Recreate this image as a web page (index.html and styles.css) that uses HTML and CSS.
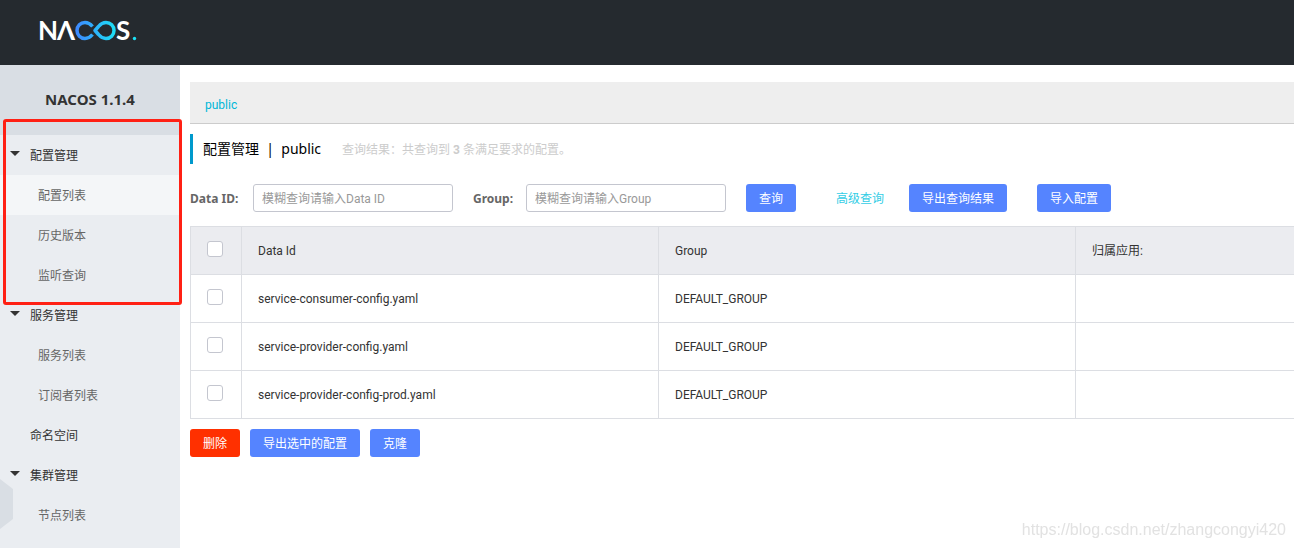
FILE: index.html
```html
<!DOCTYPE html>
<html lang="zh-CN">
<head>
<meta charset="utf-8">
<title>NACOS</title>
<link rel="stylesheet" href="styles.css">
</head>
<body>
<header class="topbar">
  <a class="logo" href="#" aria-label="NACOS">
    <svg width="110" height="41" viewBox="-4 -8 110 41">
      <defs>
        <linearGradient id="loop" gradientUnits="userSpaceOnUse" x1="36" y1="0" x2="77" y2="0">
          <stop offset="0" stop-color="#3f86ff"/>
          <stop offset="1" stop-color="#1be1f6"/>
        </linearGradient>
      </defs>
      <text class="logo-letter" x="-1" y="22">N</text>
      <text class="logo-letter" x="18" y="22">Λ</text>
      <path d="M53.500 8.500C51 5.500 49 4.500 46 4.500C41.500 4.500 38 8 38 12.500S41.500 20.500 46 20.500C49 20.500 51 19.500 53.500 16.500M56 12.500L59.500 8.500C62 5.500 64 4.500 67 4.500C71.500 4.500 75 8 75 12.500S71.500 20.500 67 20.500C64 20.500 62 19.500 59.500 16.500Z" fill="none" stroke="url(#loop)" stroke-width="3.500" stroke-linejoin="round"/>
      <text class="logo-letter" x="77" y="22">S</text>
      <circle cx="95.500" cy="20.500" r="1.700" fill="#1be1f6"/>
    </svg>
  </a>
</header>
<div class="layout">
  <aside class="sidebar">
    <h1 class="version">NACOS 1.1.4</h1>
    <nav class="menu">
      <a class="item group open" href="#">配置管理</a>
      <a class="item sub active" href="#">配置列表</a>
      <a class="item sub" href="#">历史版本</a>
      <a class="item sub" href="#">监听查询</a>
      <a class="item group open" href="#">服务管理</a>
      <a class="item sub" href="#">服务列表</a>
      <a class="item sub" href="#">订阅者列表</a>
      <a class="item group" href="#">命名空间</a>
      <a class="item group open" href="#">集群管理</a>
      <a class="item sub" href="#">节点列表</a>
    </nav>
    <button class="collapse" type="button" aria-label="收起"></button>
    <div class="highlight"></div>
  </aside>
  <main class="main">
    <div class="namespaces"><a class="namespace" href="#">public</a></div>
    <div class="heading">
      <h2 class="title">配置管理&nbsp; |&nbsp; public</h2>
      <span class="result">查询结果：共查询到 <strong>3</strong> 条满足要求的配置。</span>
    </div>
    <form class="search">
      <label class="label" for="data-id">Data ID:</label>
      <input class="field" id="data-id" type="text" placeholder="模糊查询请输入Data ID">
      <label class="label label-next" for="group">Group:</label>
      <input class="field" id="group" type="text" placeholder="模糊查询请输入Group">
      <button class="btn btn-query" type="button">查询</button>
      <a class="advanced" href="#">高级查询</a>
      <button class="btn btn-export" type="button">导出查询结果</button>
      <button class="btn" type="button">导入配置</button>
    </form>
    <table class="table">
      <thead>
        <tr><th class="check"><input class="box" type="checkbox" aria-label="全选"></th><th class="col">Data Id</th><th class="col">Group</th><th>归属应用:</th></tr>
      </thead>
      <tbody>
        <tr><td class="check"><input class="box" type="checkbox" aria-label="service-consumer-config.yaml"></td><td>service-consumer-config.yaml</td><td>DEFAULT_GROUP</td><td></td></tr>
        <tr><td class="check"><input class="box" type="checkbox" aria-label="service-provider-config.yaml"></td><td>service-provider-config.yaml</td><td>DEFAULT_GROUP</td><td></td></tr>
        <tr><td class="check"><input class="box" type="checkbox" aria-label="service-provider-config-prod.yaml"></td><td>service-provider-config-prod.yaml</td><td>DEFAULT_GROUP</td><td></td></tr>
      </tbody>
    </table>
    <div class="actions">
      <button class="btn btn-danger" type="button">删除</button>
      <button class="btn" type="button">导出选中的配置</button>
      <button class="btn" type="button">克隆</button>
    </div>
  </main>
</div>
<div class="watermark">https://blog.csdn.net/zhangcongyi420</div>
</body>
</html>
```
FILE: styles.css
```css
* {
  box-sizing: border-box;
}

body {
  margin: 0;
  height: 100vh;
  display: flex;
  flex-direction: column;
  overflow: hidden;
  background: #fff;
  color: #333;
  font: 12px/20px Roboto, "Noto Sans CJK SC", sans-serif;
}

a {
  text-decoration: none;
}

.topbar {
  flex: none;
  height: 65px;
  padding: 10px 35px;
  background: #252a2f;
}

.logo {
  display: inline-block;
}

.logo svg {
  display: block;
}

.logo-letter {
  fill: #fff;
  font: 700 26px Lato, sans-serif;
}

.layout {
  flex: 1;
  display: flex;
  min-height: 0;
}

.sidebar {
  position: relative;
  flex: none;
  width: 180px;
  background: #eaedf1;
}

.version {
  margin: 0;
  height: 70px;
  background: #d9dee4;
  font: 700 15px/68px "Noto Sans", sans-serif;
  text-align: center;
}

.menu {
  display: flex;
  flex-direction: column;
}

.item {
  position: relative;
  height: 40px;
  line-height: 42px;
}

.group {
  padding-left: 30px;
  color: #333;
}

.sub {
  padding-left: 38px;
  color: #666;
}

.active {
  background: #f4f6f8;
}

.open::before {
  content: "";
  position: absolute;
  left: 10px;
  top: 16px;
  border: 5px solid transparent;
  border-top-color: #333;
  border-bottom: 0;
}

.collapse {
  position: absolute;
  left: 0;
  top: 414px;
  width: 13px;
  height: 50px;
  padding: 0;
  border: 0;
  background: #d9dee4;
  clip-path: polygon(0 0, 100% 20%, 100% 80%, 0 100%);
}

.highlight {
  position: absolute;
  left: 3px;
  top: 54px;
  width: 179px;
  height: 186px;
  border: 3px solid #ff2014;
  border-radius: 3px;
  pointer-events: none;
}

.main {
  flex: 1;
  min-width: 0;
  padding: 17px 0 0 10px;
}

.namespaces {
  height: 42px;
  padding: 13px 15px;
  border-bottom: 1px solid #ccc;
  background: #eee;
}

.namespace {
  color: #00b7d8;
}

.heading {
  display: flex;
  align-items: center;
  gap: 21px;
  height: 30px;
  margin: 10px 0 20px;
  padding-left: 10px;
  border-left: 3px solid #09c;
}

.title {
  margin: 0;
  color: #000;
  font: 400 14px/20px "Noto Sans", "Noto Sans CJK SC", sans-serif;
}

.result {
  padding-top: 2px;
  color: #ccc;
}

.search {
  display: flex;
  align-items: center;
  height: 28px;
  margin-bottom: 14px;
  white-space: nowrap;
}

.label {
  width: 63px;
  padding-top: 2px;
  color: #666;
  font-family: "Noto Sans", sans-serif;
  font-weight: 700;
}

.label-next {
  width: 53px;
  margin-left: 20px;
}

.field {
  width: 200px;
  height: 28px;
  padding: 2px 8px 0;
  border: 1px solid #c4c6cf;
  border-radius: 3px;
  font: inherit;
}

.field::placeholder {
  color: #999;
  opacity: 1;
}

.btn {
  height: 28px;
  padding: 2px 13px 0;
  border: 0;
  border-radius: 3px;
  background: #5584ff;
  color: #fff;
  font: inherit;
}

.btn-query {
  margin: 0 40px 0 20px;
}

.btn-export {
  margin: 0 30px 0 25px;
}

.btn-danger {
  background: #ff3000;
}

.advanced {
  padding-top: 2px;
  color: #33cde5;
}

.table {
  width: 100%;
  table-layout: fixed;
  border-collapse: collapse;
}

.table th,
.table td {
  height: 48px;
  padding: 0 16px;
  border: 1px solid #dcdee3;
  border-right: 0;
  font-weight: 400;
  text-align: left;
}

.table th {
  background: #ebecf0;
}

.table .check {
  width: 51px;
}

.table .col {
  width: 417px;
}

.box {
  appearance: none;
  display: block;
  width: 16px;
  height: 16px;
  margin: 0 0 3px;
  border: 1px solid #c4c6cf;
  border-radius: 3px;
  background: #fff;
}

.actions {
  display: flex;
  gap: 10px;
  margin-top: 10px;
}

.watermark {
  position: fixed;
  right: 8px;
  bottom: 8px;
  color: #e2e2e2;
  font: 16px/20px "Liberation Sans", Arial, sans-serif;
}
```
